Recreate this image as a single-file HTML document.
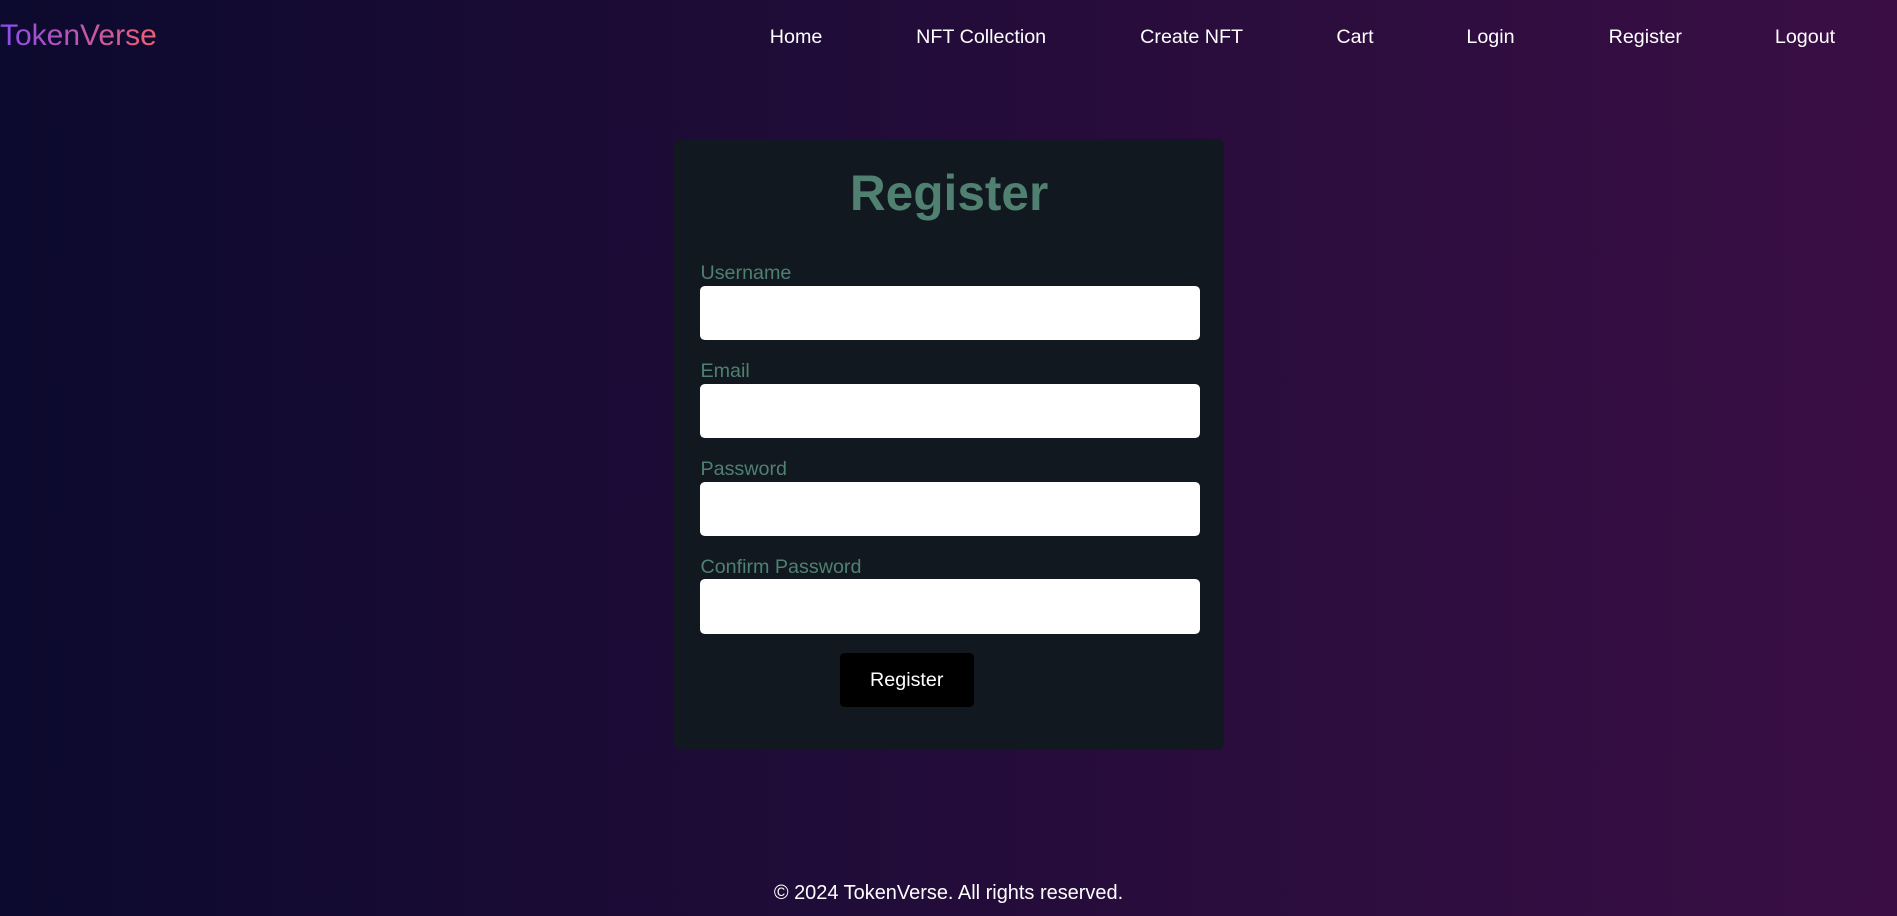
<!DOCTYPE html>
<html><head><meta charset="utf-8"><style>
html,body{margin:0;padding:0;width:1897px;height:916px;overflow:hidden}
body{background:linear-gradient(to right,#0c0a2e,#3a0e45);font-family:"Liberation Sans",Arial,sans-serif;position:relative}
#z{zoom:1.2098;position:absolute;left:0;top:0;width:1568px;height:757px}
.logo{position:absolute;left:0;top:15px;font-size:24.8px;background:linear-gradient(to right,#8a4dec,#f0606e);-webkit-background-clip:text;background-clip:text;color:transparent;line-height:30px}
.nav a{position:absolute;top:21px;color:#fff;font-size:16.3px;line-height:20px;text-decoration:none;transform:translateX(-50%);white-space:nowrap}
.card{position:absolute;left:557px;top:115px;width:455px;height:505px;background:#111820;border-radius:6px}
h1{position:absolute;left:0;width:455px;top:137px;margin:0;text-align:center;font-size:41px;line-height:46px;color:#4f8070;font-weight:bold}
.lbl{position:absolute;left:579px;color:#4f8070;font-size:16.3px;line-height:18px}
.in{position:absolute;left:579px;width:413px;height:45px;background:#fff;border-radius:4px}
.btn{position:absolute;left:694px;top:540px;width:111px;height:44px;background:#000;border-radius:4px;color:#fff;font-size:16.3px;line-height:45px;text-align:center}
.foot{position:absolute;left:0;width:1568px;top:730px;text-align:center;color:#fff;font-size:16.5px;line-height:18px}
</style></head><body><div id="z">
<div class="logo">TokenVerse</div>
<div class="nav">
<a style="left:658px">Home</a>
<a style="left:811px">NFT Collection</a>
<a style="left:985px">Create NFT</a>
<a style="left:1120px">Cart</a>
<a style="left:1232px">Login</a>
<a style="left:1360px">Register</a>
<a style="left:1492px">Logout</a>
</div>
<div class="card"></div>
<h1 style="left:557px">Register</h1>
<div class="lbl" style="top:217px">Username</div>
<div class="in" style="top:236px"></div>
<div class="lbl" style="top:298px">Email</div>
<div class="in" style="top:317px"></div>
<div class="lbl" style="top:379px">Password</div>
<div class="in" style="top:398px"></div>
<div class="lbl" style="top:460px">Confirm Password</div>
<div class="in" style="top:479px"></div>
<div class="btn">Register</div>
<div class="foot">© 2024 TokenVerse. All rights reserved.</div>
</div></body></html>
